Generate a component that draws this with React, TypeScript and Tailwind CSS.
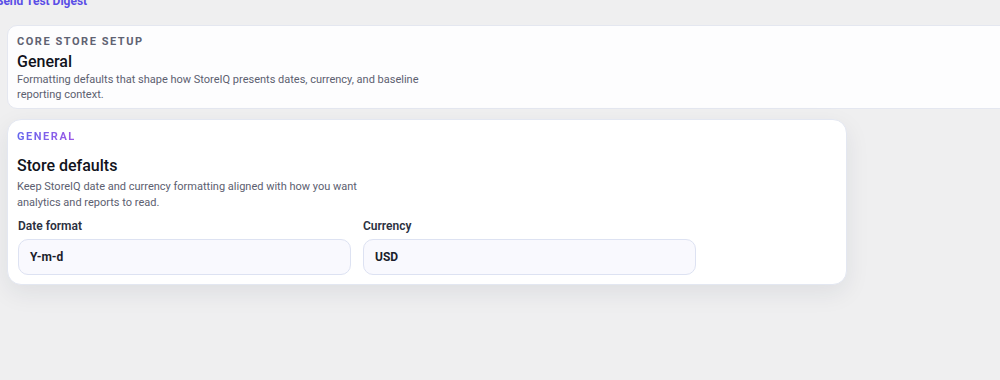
import React from 'react';

interface FieldProps {
  label: string;
  value: string;
}

function Field({ label, value }: FieldProps) {
  return (
    <div className="flex flex-col">
      <span className="text-[12px] font-semibold text-[#2b3040] leading-[16px] mb-[5px]">{label}</span>
      <div className="h-[36px] rounded-[10px] border border-[#dde2f2] bg-[#f9f9fe] px-[11px] flex items-center text-[12px] font-bold text-[#1b1e2b]">
        {value}
      </div>
    </div>
  );
}

export default function App() {
  return (
    <div
      className="w-[1000px] h-[380px] bg-[#efeff0] overflow-hidden"
      style={{ fontFamily: 'Roboto, "Noto Sans", sans-serif' }}
    >
      {/* Cut-off action link from the section above */}
      <div className="-mt-[7px] -ml-[4px] text-[12px] font-bold text-[#5a4ee6] leading-[16px]">
        Send Test Digest
      </div>

      {/* Page header card */}
      <div className="mt-[16px] ml-[7px] -mr-[20px] rounded-[10px] border border-[#e4e7f0] bg-[#fdfdfe] pl-[9px] pt-[8px] pb-[6px]">
        <p className="text-[11px] font-bold uppercase tracking-[0.14em] text-[#5f6272] leading-[16px]">Core Store Setup</p>
        <h2 className="text-[16px] font-medium text-[#11131c] leading-[20px] mt-[2px]">General</h2>
        <p className="text-[11px] text-[#5c6070] leading-[15px] max-w-[420px]">
          Formatting defaults that shape how StoreIQ presents dates, currency, and baseline reporting context.
        </p>
      </div>

      {/* Settings card */}
      <div className="mt-[10px] ml-[7px] w-[840px] rounded-[14px] border border-[#e3e7f1] bg-white shadow-[0_8px_24px_rgba(30,35,60,0.08)] pl-[9px] pr-[10px] pt-[3px] pb-[9px]">
        <p className="text-[11px] font-bold uppercase tracking-[0.14em] leading-[16px] bg-gradient-to-r from-[#6466ee] to-[#9b57e6] bg-clip-text text-transparent inline-block">
          General
        </p>
        <h3 className="text-[16px] font-medium text-[#11131c] leading-[20px] mt-[9px]">Store defaults</h3>
        <p className="text-[11px] text-[#5c6070] leading-[16px] max-w-[375px] mt-[3px]">
          Keep StoreIQ date and currency formatting aligned with how you want analytics and reports to read.
        </p>
        <div className="grid grid-cols-2 gap-[12px] w-[678px] mt-[7px] ml-[1px]">
          <Field label="Date format" value="Y-m-d" />
          <Field label="Currency" value="USD" />
        </div>
      </div>
    </div>
  );
}
